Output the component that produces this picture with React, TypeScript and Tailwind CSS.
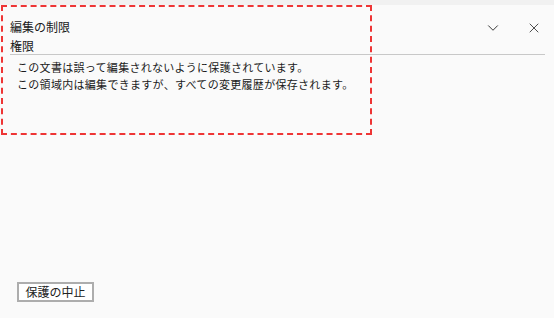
import { ChevronDown, X } from "lucide-react";

const font = { fontFamily: '"Noto Sans CJK JP", "Noto Sans", sans-serif' };

export default function App() {
  return (
    <div className="relative w-[554px] h-[318px] bg-[#fafafa] text-[#1a1a1a] overflow-hidden" style={font}>
      <div className="h-[5px] bg-[#f1f1f1]" />
      <div className="flex items-start justify-between pl-[10px] pr-[12px] pt-[12px]">
        <div className="text-[12px] leading-[20px]">編集の制限</div>
        <div className="flex items-center gap-[24px] pt-[2px] text-[#333]">
          <ChevronDown className="w-[18px] h-[18px]" strokeWidth={1.3} />
          <X className="w-[16px] h-[16px]" strokeWidth={1.3} />
        </div>
      </div>
      <div className="ml-[10px] mr-[9px] border-b border-[#c8c8c8] text-[12px] leading-[16px] pt-[1px]">権限</div>
      <div className="pl-[17px] pt-[4px] text-[11px] leading-[17px] tracking-[0.3px] text-[#1a1a1a]">
        <p>この文書は誤って編集されないように保護されています。</p>
        <p>この領域内は編集できますが、すべての変更履歴が保存されます。</p>
      </div>
      <div className="absolute left-[1px] top-[5px] w-[371px] h-[130px] border-2 border-dashed border-[#ee3535] pointer-events-none" />
      <button className="absolute left-[17px] top-[282px] w-[77px] h-[20px] border-2 border-[#adadad] bg-white text-[12px] leading-[14px] text-[#222]">
        保護の中止
      </button>
    </div>
  );
}
